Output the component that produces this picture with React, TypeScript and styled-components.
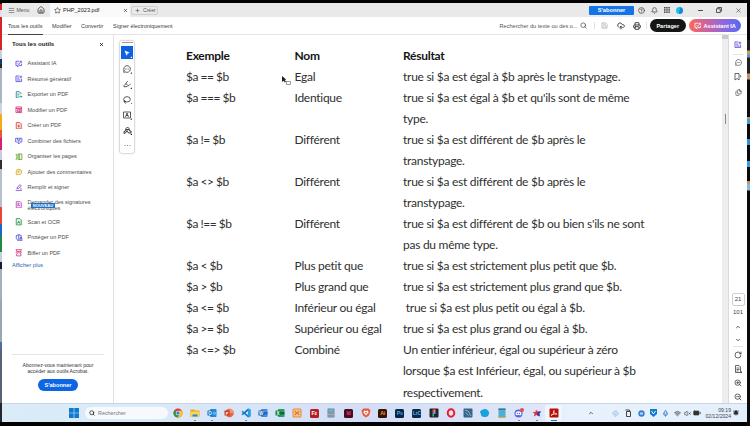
import React from 'react';
import styled, { createGlobalStyle } from 'styled-components';
import {
  Menu, House, Star, X, Plus, CircleHelp, Bell, Minus, Search, Save, CloudUpload, Printer,
  MousePointer2, ZoomIn, ZoomOut, Highlighter, Lasso, Files, ChevronUp, ChevronDown, RotateCw,
  Mic, Wifi, VolumeX, BatteryMedium, BellRing, Fan, MessageCircleMore,
} from 'lucide-react';

const GlobalStyle = createGlobalStyle`
  * { box-sizing: border-box; }
  body { margin: 0; background: #000; overflow: hidden; font-family: "Liberation Sans", Arial, sans-serif; }
`;

const Screen = styled.div`
  width: 750px; height: 426px; display: grid; overflow: hidden;
  grid-template-columns: 2px 745px 3px; background: #020203;
`;
const LeftEdge = styled.div`
  height: 426px;
  background: linear-gradient(#000 0 4px, #d91e24 4px 10px, #dfe3ee 10px 17px, #d4242b 17px 50px, #c9cfdd 50px 59px,
    #173a72 59px 64px, #2a2326 64px 68px, #aab4c5 68px 103px, #cbd3de 103px 114px, #f2ab1d 114px 130px, #e8553a 130px 138px,
    #d81f77 138px 150px, #c6cedb 150px 160px, #342b33 160px 169px, #b6bfcc 169px 207px, #e8453a 207px 224px,
    #1769c5 224px 236px, #218844 236px 252px, #c7cedb 252px 262px, #101c38 262px 269px, #a6aeba 269px 300px,
    #9ca5b4 300px 342px, #4c6ba6 342px 350px, #596273 350px 403px, #24272c 403px 422px, #000 422px);
`;
const RightEdge = styled.div`
  height: 426px;
  background: linear-gradient(#060608 0 40px, #1d1e21 40px 50px, #d09b55 51px 54px, #6a95cf 54px 57px, #202124 58px 73px,
    #ca8d60 74px 79px, #0b0c0e 80px 117px, #c3925d 117px 119px, #3c9ede 119px 124px, #08090b 124px 139px,
    #3c8ed0 139px 145px, #08090b 145px 161px, #3c9ede 161px 167px, #08090b 167px 181px, #cc8a5d 181px 183px,
    #8ab6df 184px 190px, #08090b 191px);
`;
const Window = styled.div`
  margin-top: 3px; height: 419px; background: #fff; display: flex; flex-direction: column; color: #333;
`;

const TitleBar = styled.header`
  height: 14px; background: #e9e9e9; display: flex; align-items: center; flex: none; font-size: 6px;
`;
const MenuButton = styled.div`
  display: flex; align-items: center; gap: 2px; width: 34px; padding-left: 5.5px; font-size: 5.2px; color: #555;
`;
const HomeSlot = styled.div`width: 13.5px; display: flex; align-items: center; padding-left: 1px;`;
const Tab = styled.div`
  height: 14px; width: 80.5px; background: #fafafa; display: flex; align-items: center; padding: 0 2.5px 0 4px; gap: 2.5px;
`;
const TabName = styled.span`flex: 1; font-size: 5.6px; color: #222;`;
const CreateTab = styled.div`
  display: flex; align-items: center; gap: 3px; width: 27px; height: 9px; padding-left: 3px; border: 1px solid #cfcfcf;
  border-radius: 2px; font-size: 5.1px; color: #555; margin-left: 1px;
`;
const TitleRight = styled.div`margin-left: auto; display: flex; align-items: center;`;
const SubscribeSmall = styled.div`
  width: 45px; height: 9px; border-radius: 1px; background: #1473e6; color: #fff; font-weight: 700; font-size: 5.7px;
  line-height: 9px; text-align: center; margin-right: 1.5px;
`;
const Slot = styled.div<{ $w: number }>`
  width: ${p => p.$w}px; display: flex; align-items: center; justify-content: center; flex: none;
`;
const Avatar = styled.div`
  width: 7px; height: 7px; border-radius: 50%; background: linear-gradient(100deg, #13c3e8 45%, #1689d4 55%);
`;

const Toolbar = styled.nav`
  height: 18px; flex: none; display: flex; align-items: center; border-bottom: 1px solid #e4e4e4; font-size: 6px; color: #3c3c3c;
`;
const MenuItem = styled.div<{ $w: number; $active?: boolean }>`
  height: 18px; line-height: 18px; width: ${p => p.$w}px; margin-right: 9px; white-space: nowrap; font-size: 5.5px;
  border-bottom: ${p => (p.$active ? '1px solid #444' : 'none')};
`;
const ToolbarRight = styled.div`margin-left: auto; display: flex; align-items: center; padding-right: 6px;`;
const FindText = styled.span`font-size: 5.6px; width: 78px; white-space: nowrap; color: #555;`;
const VLine = styled.div`width: 1px; height: 7px; background: #e2e2e2;`;
const Pill = styled.div<{ $w: number; $bg: string }>`
  width: ${p => p.$w}px; height: 12.5px; border-radius: 7px; background: ${p => p.$bg}; color: #fff; font-weight: 700;
  font-size: 5.6px; display: flex; align-items: center; justify-content: center; gap: 2px; white-space: nowrap; flex: none;
`;
const PromoPill = styled(Pill)`margin-top: 5px;`;

const Body = styled.div`
  height: 368px; flex: none; display: grid; grid-template-columns: 112px 608px 7px 18px;
`;
const Panel = styled.aside`
  border-right: 1px solid #e2e2e2; display: flex; flex-direction: column; padding: 0 9px 0 10px;
`;
const PanelHead = styled.div`
  height: 20.5px; display: flex; align-items: center; justify-content: space-between; font-weight: 700; font-size: 6.1px;
  line-height: 1; color: #222; flex: none; padding-bottom: 2px;
`;
const ToolList = styled.div`display: flex; flex-direction: column;`;
const ToolRow = styled.div<{ $tall?: boolean }>`
  height: ${p => (p.$tall ? 19 : 15.5)}px; display: flex; align-items: center; gap: 5px; padding-left: 3px;
  font-size: 5.5px; line-height: 6px; color: #4b4b4b; position: relative; white-space: nowrap;
`;
const NewBadge = styled.span`
  position: absolute; left: 19px; top: 7.5px; width: 24px; height: 5.5px; background: #1b70c9; color: #fff; font-weight: 700;
  font-size: 4.1px; line-height: 5.5px; text-align: center;
`;
const MoreLink = styled.div`font-size: 5.7px; color: #2467b3; margin-top: 1.5px;`;
const Promo = styled.div`
  margin-top: auto; height: 49.5px; border-top: 1px solid #e4e4e4; display: flex; flex-direction: column; align-items: center;
  font-size: 5.1px; line-height: 6px; text-align: center; padding-top: 7px; color: #333; white-space: nowrap;
`;

const Document = styled.main`display: flex; align-items: flex-start; position: relative;`;
const ToolPalette = styled.div`
  margin: 5px 0 0 5px; width: 16px; height: 114px; border: 1px solid #dcdcdc; border-radius: 3px; display: flex;
  flex-direction: column; align-items: center; box-shadow: 0 0 2px #e4e4e4; flex: none;
`;
const Handle = styled.div`width: 11px; height: 1px; background: #9a9a9a; margin: 1px 0 3px; flex: none;`;
const Tool = styled.div<{ $active?: boolean }>`
  width: 12.5px; height: ${p => (p.$active ? 13 : 15.3)}px; display: flex; align-items: center; justify-content: center;
  color: ${p => (p.$active ? '#fff' : '#333')}; background: ${p => (p.$active ? '#0d62e0' : 'transparent')};
  margin-bottom: ${p => (p.$active ? 2.5 : 0)}px; position: relative; flex: none;
  &::after { content: ''; position: absolute; right: 1px; bottom: ${p => (p.$active ? 1 : 3)}px; width: 2px; height: 2px;
    background: currentColor; clip-path: polygon(100% 0, 100% 100%, 0 100%); }
`;
const Table = styled.div`
  margin: 9.5px 0 0 51px; font-family: Lato, "Open Sans", sans-serif; font-size: 12px; line-height: 21.07px;
  letter-spacing: -0.27px;
`;
const Row = styled.div<{ $head?: boolean }>`
  display: grid; grid-template-columns: 108.5px 108.5px 260px; font-weight: ${p => (p.$head ? 700 : 400)};
  color: ${p => (p.$head ? '#151515' : '#303030')};
`;
const Cell = styled.div`white-space: pre;`;
const CodeCell = styled(Cell)`letter-spacing: -0.5px;`;
const Pointer = styled.svg`position: absolute; left: 168px; top: 41px;`;
const Scroll = styled.div`
  background: #ededed; border-right: 1px solid #dadada; display: flex; flex-direction: column; align-items: center;
`;
const ScrollTop = styled.div`width: 6px; height: 4px; background: #c9c9c9;`;
const ScrollMark = styled.div`width: 1px; height: 10px; margin-top: 75px; background: #8b8b8b;`;

const Rail = styled.div`display: flex; flex-direction: column; align-items: center; color: #444; font-size: 6px;`;
const RailSlot = styled.div<{ $h: number }>`
  height: ${p => p.$h}px; display: flex; align-items: center; justify-content: center; flex: none;
`;
const HLine = styled.div`width: 10px; height: 1px; background: #e2e2e2; flex: none;`;
const PageBox = styled.div`
  width: 13px; height: 13px; margin-top: auto; border: 1px solid #cfcfcf; border-radius: 2px; line-height: 11px;
  text-align: center; flex: none;
`;

const Taskbar = styled.footer`
  height: 19px; flex: none; border-top: 1px solid #c7d3e8; display: flex; align-items: center;
  background: linear-gradient(90deg, #d9ecf8, #dce9f8 20%, #d3def6 50%, #dfe6f8 72%, #e7f2fc 76%, #e3effb);
`;
const SearchPill = styled.div`
  width: 83.5px; height: 12px; border-radius: 6px; background: #f6fafd; display: flex; align-items: center; gap: 3.5px;
  padding-left: 4px; font-size: 5.4px; color: #777; margin-right: 1px;
`;
const AppSlot = styled.div<{ $active?: boolean; $run?: boolean }>`
  width: 17.1px; height: 16px; display: flex; align-items: center; justify-content: center; position: relative; flex: none;
  border-radius: 2px; background: ${p => (p.$active ? '#f1f5fd' : 'transparent')};
  &::after { content: ''; position: absolute; bottom: 0; width: ${p => (p.$active ? 6 : 2)}px; height: 1px;
    background: ${p => (p.$active ? '#1d74c4' : p.$run ? '#7f8794' : 'transparent')}; }
`;
const Tile = styled.div<{ $bg: string; $c?: string }>`
  width: 9px; height: 9px; border-radius: 1.5px; background: ${p => p.$bg}; color: ${p => p.$c ?? '#fff'};
  font-weight: 700; font-size: 5.2px; line-height: 9px; text-align: center; letter-spacing: -0.2px;
`;
const Tray = styled.div`margin-left: auto; display: flex; align-items: center; color: #333;`;
const Clock = styled.div`font-size: 5.1px; line-height: 6.5px; text-align: right; width: 28px; color: #444;`;

const ico = { size: 7, strokeWidth: 2.2 };

const tools: { label: string; color: string; badge?: string }[] = [
  { label: 'Assistant IA', color: '#5b4fe0' },
  { label: 'Résumé génératif', color: '#5b4fe0' },
  { label: 'Exporter un PDF', color: '#14898b' },
  { label: 'Modifier un PDF', color: '#d6357f' },
  { label: 'Créer un PDF', color: '#da3b38' },
  { label: 'Combiner des fichiers', color: '#5759de' },
  { label: 'Organiser les pages', color: '#60a52c' },
  { label: 'Ajouter des commentaires', color: '#d7a51d' },
  { label: 'Remplir et signer', color: '#8049ce' },
  { label: 'Demander des signatures\nélectroniques', color: '#b63fc0', badge: 'NOUVEAU' },
  { label: 'Scan et OCR', color: '#1f9146' },
  { label: 'Protéger un PDF', color: '#4b4bd2' },
  { label: 'Biffer un PDF', color: '#d94382' },
];

const ToolLabel = styled.span`white-space: pre;`;

const toolPaths = [
  'M7 2H1.500v7H4v2l2-2h4.500V6M9.500 1v4M7.500 3h4M4 5.500l2 1.500 2-1.500',
  'M7 1.500H1.500v9h9V6M3.500 5h3M3.500 8h5M9.500 1v4M7.500 3h4',
  'M9.500 5V3.500L7 1H2v10h4M4 5h3M4 8h2M7 9h4M9.500 7.500L11 9l-1.500 1.500',
  'M1.500 1.500h9v9h-9zM1.500 4h9M4 6h4v3H4zM8 4v7',
  'M2 1h6l2 2v8H2zM6 4v5M3.800 6.500h4.400',
  'M1 2h10v6H8M1 2v6h3M6 5v6M4 9l2 2 2-2M4 2v3h4V2',
  'M1 2h2v8H1M5 1.500h6v9H5zM7 1.500v9',
  'M2 10.500V6a4.300 4.300 0 1 1 4 4.500zM4 5h4M4 7h3',
  'M1 10.500h10M3 8l1-3 4-4 2 2-4 4zM8 8h3',
  'M2 1h6l2 2v8H2zM4 8c1-4 2-4 2 0l2-1M4 4h3',
  'M2 1h6l2 2v8H2zM4 9l2-4 2 4M5 7h2',
  'M6 1l4 1.500v3M6 1L2 2.500V6c0 2 1.500 4 4 5V1M8 7h3v4H8zM8.500 7V5.500h2V7',
  'M1 1h10M2.500 1v3h7V1M2.500 11V8L6 5l3.500 3v3zM1 6h3M8 6h3',
];

const ToolIcon = ({ index, color }: { index: number; color: string }) => (
  <svg width="7.500" height="7.500" viewBox="0 0 12 12" fill={color.length === 7 ? color + '18' : 'none'} stroke={color} strokeWidth="1.300">
    <path d={toolPaths[index]} />
  </svg>
);

const rows: [string, string, string][] = [
  ['$a == $b', 'Egal', 'true si $a est égal à $b après le transtypage.'],
  ['$a === $b', 'Identique', "true si $a est égal à $b et qu'ils sont de même\ntype."],
  ['$a != $b', 'Différent', 'true si $a est différent de $b après le\ntranstypage.'],
  ['$a <> $b', 'Différent', 'true si $a est différent de $b après le\ntranstypage.'],
  ['$a !== $b', 'Différent', "true si $a est différent de $b ou bien s'ils ne sont\npas du même type."],
  ['$a < $b', 'Plus petit que', 'true si $a est strictement plus petit que $b.'],
  ['$a > $b', 'Plus grand que', 'true si $a est strictement plus grand que $b.'],
  ['$a <= $b', 'Inférieur ou égal', ' true si $a est plus petit ou égal à $b.'],
  ['$a >= $b', 'Supérieur ou égal', 'true si $a est plus grand ou égal à $b.'],
  ['$a <=> $b', 'Combiné', 'Un entier inférieur, égal ou supérieur à zéro\nlorsque $a est Inférieur, égal, ou supérieur à $b\nrespectivement.'],
];

const Svg = ({ children }: { children: React.ReactNode }) => <svg width="10" height="10" viewBox="0 0 20 20">{children}</svg>;

const Office = ({ c, d, l, text }: { c: string; d: string; l: string; text: string }) => (
  <Svg>
    <rect x="6" y="2" width="13" height="16" rx="1.500" fill={c} />
    <path d="M6 8h13v5H6z" fill={l} />
    <rect x="1" y="5" width="10" height="10" rx="1" fill={d} />
    <text x="6" y="13.300" fontSize="9" fontWeight="700" textAnchor="middle" fill="#fff">{text}</text>
  </Svg>
);

const apps: { node: React.ReactNode; run?: boolean; active?: boolean }[] = [
  { node: <Svg><circle cx="10" cy="10" r="9" fill="#e23d32" /><path d="M10 10L2.200 5.500A9 9 0 0 0 9 19l4-7z" fill="#289b4a" /><path d="M10 5.500h8A9 9 0 0 1 9 19l5-8z" fill="#f8c61b" /><circle cx="10" cy="10" r="4.400" fill="#fff" /><circle cx="10" cy="10" r="3.400" fill="#337de0" /></Svg> },
  { node: <Svg><path d="M1 3h7l2 2h9v12H1z" fill="#e9a51b" /><path d="M1 7h18v10H1z" fill="#fbd34e" /><path d="M5 13h10v4H5z" fill="#2686dc" /></Svg>, run: true },
  { node: <Office c="#1f8ddd" d="#1069bf" l="#58b4ee" text="O" />, run: true },
  { node: <Svg><circle cx="11" cy="10" r="8.500" fill="#e8643c" /><path d="M11 1.500a8.500 8.500 0 0 1 8.500 8.500H11z" fill="#f49372" /><rect x="1" y="5" width="10" height="10" rx="1" fill="#c43f20" /><text x="6" y="13" fontSize="8" fontWeight="700" textAnchor="middle" fill="#fff">P</text></Svg> },
  { node: <Svg><path d="M14 1l5 2v14l-5 2L1 7.500l2-2 11 8.500z" fill="#1683cf" /><path d="M14 1v5L3 14.500l-2-2z" fill="#1277c2" /><path d="M14 1l5 2v14l-5 2z" fill="#27a0ec" /></Svg>, run: true },
  { node: <Office c="#3d91df" d="#174ea6" l="#2266c2" text="W" /> },
  { node: <Office c="#21a366" d="#107c41" l="#17643a" text="X" /> },
  { node: <Svg><rect x="1" y="1" width="18" height="18" rx="3" fill="#e98a32" /><rect x="3" y="3" width="14" height="14" rx="2" fill="#f6c795" /><path d="M5.500 6l4 4-4 4M14.500 6l-4 4 4 4M7 10h6" fill="none" stroke="#e07c22" strokeWidth="2.500" /></Svg> },
  { node: <Tile $bg="#b51d23">Fz</Tile> },
  { node: <Svg><rect x="3" y="1" width="14" height="18" rx="1" fill="#75858f" /><path d="M5 3h10v4H5z" fill="#55c2e8" /><path d="M5 10h10M5 13h10M5 16h10" stroke="#dbe5e9" strokeWidth="1.600" strokeDasharray="2 2" /></Svg> },
  { node: <Tile $bg="#470d22" $c="#e54073">Id</Tile> },
  { node: <Svg><path d="M5 1h10l4 4-3 10-6 4-6-4L1 5z" fill="#ee5533" /><path d="M6 5l4 1 4-1 1 4-5 6-5-6z" fill="#fff" /><path d="M8 8h4l-2 4z" fill="#ee5533" /></Svg> },
  { node: <Tile $bg="#351203" $c="#eb9435">Ai</Tile> },
  { node: <Tile $bg="#062643" $c="#45a8eb">Ps</Tile> },
  { node: <Tile $bg="#082b4a" $c="#65aee5">LrC</Tile> },
  { node: <Svg><rect x="1" y="1" width="18" height="18" rx="2" fill="#252525" /><path d="M7 3h3v5H7z" fill="#f2513f" /><path d="M10 3h3v5h-3z" fill="#ff826c" /><path d="M7 8h3v4H7z" fill="#a45af0" /><path d="M10 8h3v4h-3z" fill="#30bdf5" /><path d="M7 12h3v5H7z" fill="#20c578" /></Svg> },
  { node: <Svg><ellipse cx="10" cy="10" rx="6.500" ry="7.500" fill="#f8dce2" stroke="#df1e36" strokeWidth="4" /></Svg> },
  { node: <Svg><rect x="1" y="1" width="18" height="18" rx="2" fill="#35668a" /><path d="M4 5c5-1 8 2 9 6l3 5M5 9c3 1 3 5 6 6" fill="none" stroke="#a8cce3" strokeWidth="1.500" /></Svg> },
  { node: <Svg><path d="M3 5C8-1 17 2 18 9c1 7-6 10-10 9C2 18 0 12 3 5z" fill="#15a4df" /><path d="M3 5c-2 1-2 5 0 6" stroke="#087fc0" fill="none" strokeWidth="2" /></Svg> },
  { node: <Svg><rect x="3" y="1" width="14" height="18" rx="1" fill="#4fafd1" /><path d="M3 1h14v3H3z" fill="#47778c" /><path d="M3 16h14v3H3z" fill="#b09a5c" /></Svg> },
  { node: <Svg><circle cx="9" cy="11" r="8" fill="#5967e7" /><path d="M4 8c3-2 7-2 10 0l1 5-3 2-1-1H7l-1 1-3-2z" fill="#fff" /><circle cx="7" cy="11" r="1.300" fill="#5967e7" /><circle cx="11" cy="11" r="1.300" fill="#5967e7" /><circle cx="16" cy="4" r="4" fill="#dd5145" /></Svg>, run: true },
  { node: <Svg><path d="M8 3l3 4 6-1-4 5 2 6-6-3-5 3 1-6-4-3h6z" fill="#e33142" /><path d="M11 8l8-1-4 4 1 6-6-3z" fill="#263db4" /></Svg>, run: true },
  { node: <Svg><rect x="1" y="1" width="18" height="18" rx="2" fill="#b71208" /><path d="M4 15c3-1 6-6 6-10-2 3 2 8 6 7-3-1-8 0-12 3z" fill="none" stroke="#fff" strokeWidth="1.500" /></Svg>, active: true },
];

export default function App() {
  return (
    <>
      <GlobalStyle />
      <Screen>
        <LeftEdge />
        <Window>
          <TitleBar>
            <MenuButton><Menu size={7} strokeWidth={2} />Menu</MenuButton>
            <HomeSlot><House size={8} color="#333" strokeWidth={2.3} /></HomeSlot>
            <Tab><Star {...ico} /><TabName>PHP_2023.pdf</TabName><X size={5} strokeWidth={3} /></Tab>
            <CreateTab><Plus size={5} strokeWidth={3} />Créer</CreateTab>
            <TitleRight>
              <SubscribeSmall>S'abonner</SubscribeSmall>
              <Slot $w={12.5}><CircleHelp {...ico} /></Slot>
              <Slot $w={12.5}><Bell {...ico} /></Slot>
              <Slot $w={12.5}>
                <svg width="6" height="6" viewBox="0 0 6 6" fill="#444">
                  {[0, 2.2, 4.4].map(y => [0, 2.2, 4.4].map(x => <rect key={`${x}${y}`} x={x} y={y} width="1.500" height="1.500" />))}
                </svg>
              </Slot>
              <Slot $w={12}><Avatar /></Slot>
              <Slot $w={6} />
              <Slot $w={18}><Minus size={7} strokeWidth={3} /></Slot>
              <Slot $w={20}>
                <svg width="6" height="6" viewBox="0 0 12 12" fill="none" stroke="#333" strokeWidth="1.600"><path d="M1 3.500h7.500V11H1zM3.500 3V1H11v7.500H9" /></svg>
              </Slot>
              <Slot $w={18}><X size={7} /></Slot>
            </TitleRight>
          </TitleBar>

          <Toolbar>
            <Slot $w={6} />
            <MenuItem $w={35} $active>Tous les outils</MenuItem>
            <MenuItem $w={20}>Modifier</MenuItem>
            <MenuItem $w={23}>Convertir</MenuItem>
            <MenuItem $w={60}>Signer électroniquement</MenuItem>
            <ToolbarRight>
              <FindText>Rechercher du texte ou des o...</FindText>
              <Slot $w={11.5}><Search {...ico} /></Slot>
              <Slot $w={5} /><VLine />
              <Slot $w={19}><Save {...ico} color="#aaa" /></Slot>
              <Slot $w={14}><CloudUpload size={8} color="#222" strokeWidth={2.5} /></Slot>
              <Slot $w={18}><Printer size={8} color="#222" strokeWidth={2.5} /></Slot>
              <VLine /><Slot $w={3} />
              <Pill $w={35.5} $bg="#151515">Partager</Pill>
              <Slot $w={3.5} />
              <Pill $w={52} $bg="linear-gradient(90deg,#fb6758,#c164ae 40%,#7569eb 80%,#5a66f0)">
                <ToolIcon index={0} color="#fff" />Assistant IA
              </Pill>
            </ToolbarRight>
          </Toolbar>

          <Body>
            <Panel>
              <PanelHead>Tous les outils<X size={5} strokeWidth={4} /></PanelHead>
              <ToolList>
                {tools.map(({ label, color, badge }, i) => (
                  <ToolRow key={label} $tall={!!badge}>
                    <ToolIcon index={i} color={color} />
                    <ToolLabel>{label}</ToolLabel>
                    {badge && <NewBadge>{badge}</NewBadge>}
                  </ToolRow>
                ))}
              </ToolList>
              <MoreLink>Afficher plus</MoreLink>
              <Promo>
                <span>Abonnez-vous maintenant pour<br />accéder aux outils Acrobat.</span>
                <PromoPill $w={40} $bg="#0d66e4">S'abonner</PromoPill>
              </Promo>
            </Panel>

            <Document>
              <ToolPalette>
                <Handle />
                <Tool $active><MousePointer2 size={6} fill="#fff" /></Tool>
                <Tool><MessageCircleMore size={8} strokeWidth={2.4} /></Tool>
                <Tool><Highlighter size={8} strokeWidth={2.4} /></Tool>
                <Tool><Lasso size={8} strokeWidth={2.4} /></Tool>
                <Tool>
                  <svg width="8" height="8" viewBox="0 0 16 16" fill="none" stroke="#333" strokeWidth="1.600"><path d="M1 2h14v12H1zM5 12l3-8 3 8M6 9h4" /></svg>
                </Tool>
                <Tool>
                  <svg width="9" height="9" viewBox="0 0 18 18" fill="none" stroke="#333" strokeWidth="1.900"><path d="M2 15v-4l3-1 1-5 3-3 3 3 1 5h3v4h-5l-3-5-3 5zM6 7h6" /></svg>
                </Tool>
                <svg width="7" height="14" viewBox="0 0 7 14" fill="#777"><circle cx="1" cy="7.500" r=".6" /><circle cx="3.500" cy="7.500" r=".6" /><circle cx="6" cy="7.500" r=".6" /></svg>
              </ToolPalette>
              <Table>
                <Row $head><Cell>Exemple</Cell><Cell>Nom</Cell><Cell>Résultat</Cell></Row>
                {rows.map(([code, name, result]) => (
                  <Row key={code}><CodeCell>{code}</CodeCell><Cell>{name}</Cell><Cell>{result}</Cell></Row>
                ))}
              </Table>
              <Pointer width="10" height="10" viewBox="0 0 10 10"><path d="M0 0v6l1.500-1.300L3 6.500l1-1-1.300-1.600 1.500-.3z" fill="#222" /><rect x="4.500" y="5.500" width="4" height="3" fill="#fff" stroke="#888" strokeWidth=".8" /></Pointer>
            </Document>

            <Scroll><ScrollTop /><ScrollMark /></Scroll>

            <Rail>
              <RailSlot $h={18.5}><ToolIcon index={1} color="#5d50d8" /></RailSlot>
              <HLine />
              <RailSlot $h={15}><MessageCircleMore {...ico} /></RailSlot>
              <RailSlot $h={15}>
                <svg width="8" height="8" viewBox="0 0 16 16" fill="none" stroke="#444" strokeWidth="1.600"><path d="M2 1h8v13l-4-3-4 3zM12 4c2 1 2 4 0 5" /></svg>
              </RailSlot>
              <RailSlot $h={15}><Files {...ico} /></RailSlot>
              <PageBox>21</PageBox>
              <RailSlot $h={12}>101</RailSlot>
              <RailSlot $h={17}><ChevronUp size={6} strokeWidth={3.5} /></RailSlot>
              <RailSlot $h={9}><ChevronDown size={6} strokeWidth={3.5} /></RailSlot>
              <RailSlot $h={2} /><HLine />
              <RailSlot $h={15}><RotateCw size={8} strokeWidth={2.5} /></RailSlot>
              <RailSlot $h={13}>
                <svg width="8" height="8" viewBox="0 0 16 16" fill="none" stroke="#444" strokeWidth="1.600"><path d="M3 1h7l3 3v11H3zM5 6h6M5 9h6M5 12h4" /><path d="M16 12v4h-4z" fill="#444" stroke="none" /></svg>
              </RailSlot>
              <RailSlot $h={15}><ZoomIn size={8} strokeWidth={2.5} /></RailSlot>
              <RailSlot $h={13}><ZoomOut size={8} strokeWidth={2.5} /></RailSlot>
            </Rail>
          </Body>

          <Taskbar>
            <Slot $w={67} />
            <svg width="10" height="10" viewBox="0 0 10 10"><path d="M0 0h4.700v4.700H0zM5.300 0H10v4.700H5.300zM0 5.300h4.700V10H0zM5.300 5.300H10V10H5.300z" fill="#0f7bd0" /></svg>
            <Slot $w={5.5} />
            <SearchPill><Search size={6} color="#222" strokeWidth={3} />Rechercher</SearchPill>
            {apps.map((a, i) => <AppSlot key={i} $run={a.run} $active={a.active}>{a.node}</AppSlot>)}
            <Tray>
              <Slot $w={37}><ChevronUp size={6} strokeWidth={3} /></Slot>
              <Slot $w={12}><Fan size={7} color="#8cabe0" /></Slot>
              <Slot $w={14}><svg width="6" height="8" viewBox="0 0 6 8" fill="none" stroke="#444"><path d="M1.500 2.500h4v5h-4zM.5 1h4v1.500" /></svg></Slot>
              <Slot $w={12}><svg width="7" height="7" viewBox="0 0 7 7"><circle cx="3.500" cy="3.500" r="3.200" fill="#3b7fd8" /><path d="M2 2.500h3v2H2z" fill="#b9d3f5" /></svg></Slot>
              <Slot $w={12}><svg width="7" height="8" viewBox="0 0 7 8"><path d="M0 0h7v5L3.500 8 0 5z" fill="#0c7bd0" /><path d="M1.500 2l2 3 2-3" stroke="#fff" fill="none" /></svg></Slot>
              <Slot $w={13}><Mic size={7} color="#4f80ca" strokeWidth={3} /></Slot>
              <Slot $w={11}><Wifi size={7} strokeWidth={2.5} /></Slot>
              <Slot $w={8}><VolumeX size={7} /></Slot>
              <Slot $w={12}><BatteryMedium size={8} fill="#333" /></Slot>
              <Clock>09:19<br />02/12/2024</Clock>
              <Slot $w={10}><BellRing size={6} fill="#222" /></Slot>
              <Slot $w={6} />
            </Tray>
          </Taskbar>
        </Window>
        <RightEdge />
      </Screen>
    </>
  );
}
